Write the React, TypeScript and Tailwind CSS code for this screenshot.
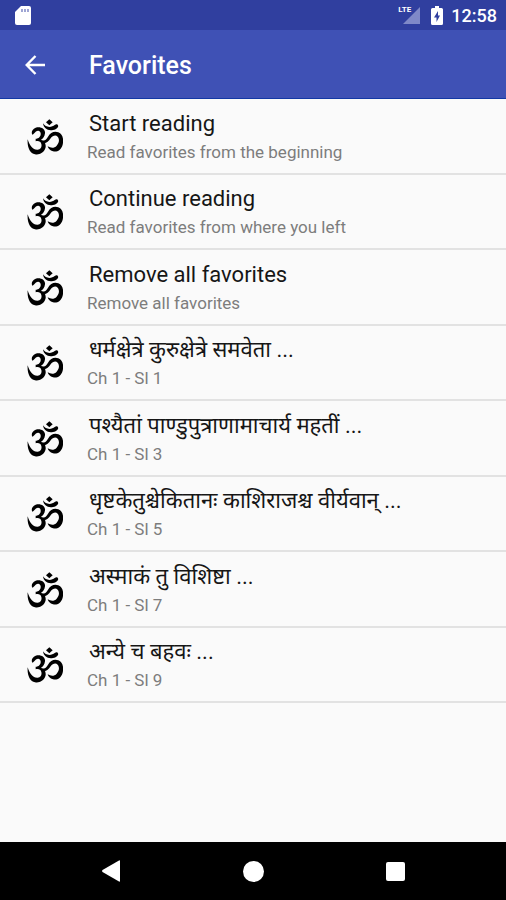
type Item = { title: string; detail: string; lang?: string };

const items: Item[] = [
  { title: "Start reading", detail: "Read favorites from the beginning" },
  { title: "Continue reading", detail: "Read favorites from where you left" },
  { title: "Remove all favorites", detail: "Remove all favorites" },
  { title: "धर्मक्षेत्रे कुरुक्षेत्रे समवेता ...", detail: "Ch 1 - Sl 1", lang: "sa" },
  { title: "पश्यैतां पाण्डुपुत्राणामाचार्य महतीं ...", detail: "Ch 1 - Sl 3", lang: "sa" },
  { title: "धृष्टकेतुश्चेकितानः काशिराजश्च वीर्यवान् ...", detail: "Ch 1 - Sl 5", lang: "sa" },
  { title: "अस्माकं तु विशिष्टा ...", detail: "Ch 1 - Sl 7", lang: "sa" },
  { title: "अन्ये च बहवः ...", detail: "Ch 1 - Sl 9", lang: "sa" },
];

function OmIcon() {
  return (
    <svg viewBox="50 37 108 108" className="mt-[2px] size-9 shrink-0" fill="currentColor" aria-hidden="true">
      <path d="M66 84C62 78 65 67 76 63C90 58 106 66 104 80C103 90 98 96 92 99C102 102 109 112 105 125C100 139 86 146 74 143C59 140 50 122 52 98C58 118 68 130 82 129C92 128 95 120 93 112C91 104 84 102 76 104V96C86 96 92 88 91 80C90 71 82 70 76 75C72 79 70 82 66 84Z" />
      <path d="M96 101C104 104 108 98 113 90C120 78 132 72 144 77C157 82 161 98 157 114C152 131 140 137 128 134C119 132 114 126 112 119C122 125 132 125 139 117C147 109 148 97 142 90C136 84 127 87 121 95C114 105 106 113 97 109Z" />
      <path d="M98 50C104 60 116 63 126 59C134 55 137 50 142 54C147 59 140 68 128 70C112 73 100 65 98 50Z" />
      <path d="M117 38L127 47L117 56L107 47Z" />
    </svg>
  );
}

function StatusBar() {
  return (
    <div className="flex h-[30px] items-center bg-[#303f9f] pr-[9px] pl-[15px] text-white">
      <svg viewBox="0 0 16 19" className="h-[19px] w-4" aria-hidden="true">
        <path d="M6 0H14Q16 0 16 2V17Q16 19 14 19H2Q0 19 0 17V6Z" fill="#fff" />
        <path d="M7 3V6M10 3V6M13 3V6" stroke="#7780c2" strokeWidth="1.4" />
      </svg>
      <div className="ml-auto flex items-center">
        <div className="relative h-[18px] w-[22px]">
          <svg viewBox="0 0 22 18" className="h-full w-full" aria-hidden="true">
            <path d="M22 1V18H5Z" fill="#7f89c8" />
          </svg>
          <span className="absolute top-0 left-0 text-[8px] leading-none font-bold">LTE</span>
        </div>
        <svg viewBox="0 0 12 19" className="ml-[11px] h-[19px] w-3" aria-hidden="true">
          <path d="M4 0H8V2H10.5Q12 2 12 3.5V17.5Q12 19 10.5 19H1.500Q0 19 0 17.500V3.500Q0 2 1.500 2H4Z" fill="#fff" />
          <path d="M7 5L3 11.500H5.500V16L9 9.500H7Z" fill="#303f9f" />
        </svg>
        <time className="ml-2 pt-px text-[18px] leading-5 font-medium">12:58</time>
      </div>
    </div>
  );
}

function AppBar() {
  return (
    <header className="flex h-[69px] items-center border-b border-[#1238a5] bg-[#3f51b5] pt-px pl-[25px] text-white">
      <button type="button" aria-label="Back" className="flex size-5 items-center justify-center">
        <svg viewBox="0 0 20 20" className="size-5" fill="none" stroke="currentColor" strokeWidth="2.4" aria-hidden="true">
          <path d="M20 10H2M10.500 1L1.700 10L10.500 19" />
        </svg>
      </button>
      <h1 className="ml-11 pt-[3px] text-[25px] leading-8 font-medium">Favorites</h1>
    </header>
  );
}

function NavigationBar() {
  return (
    <nav className="flex h-[58px] justify-center bg-black text-white">
      <button type="button" aria-label="Back" className="flex w-[142px] items-center justify-center">
        <svg viewBox="0 0 20 22" className="h-[22px] w-5" fill="currentColor" aria-hidden="true">
          <path d="M18 0.500Q19 0 19 1V21Q19 22 18 21.500L1.500 12Q0.500 11 1.500 10Z" />
        </svg>
      </button>
      <button type="button" aria-label="Home" className="flex w-[142px] items-center justify-center">
        <span className="size-[21px] rounded-full bg-white" />
      </button>
      <button type="button" aria-label="Recent apps" className="flex w-[142px] items-center justify-center">
        <span className="size-[19px] rounded-xs bg-white" />
      </button>
    </nav>
  );
}

export default function App() {
  return (
    <div className="flex min-h-screen flex-col bg-[#fafafa] font-['Roboto','Noto_Sans_Devanagari','Noto_Sans',sans-serif]">
      <StatusBar />
      <AppBar />
      <main className="flex-1">
        <ul className="grid min-h-[604px] auto-rows-fr">
          {items.map((item) => (
            <li key={item.title} className="border-b-2 border-[#e2e2e2]">
              <button type="button" className="flex h-full w-full items-center pr-4 pl-[27px] text-left">
                <OmIcon />
                <span className="ml-6 flex min-w-0 flex-col">
                  <span lang={item.lang} className="truncate pl-[2px] text-[22px] leading-8 text-[#161616]">
                    {item.title}
                  </span>
                  <span className="truncate text-[17px] leading-6 text-[#7d7d7d]">{item.detail}</span>
                </span>
              </button>
            </li>
          ))}
        </ul>
      </main>
      <NavigationBar />
    </div>
  );
}
